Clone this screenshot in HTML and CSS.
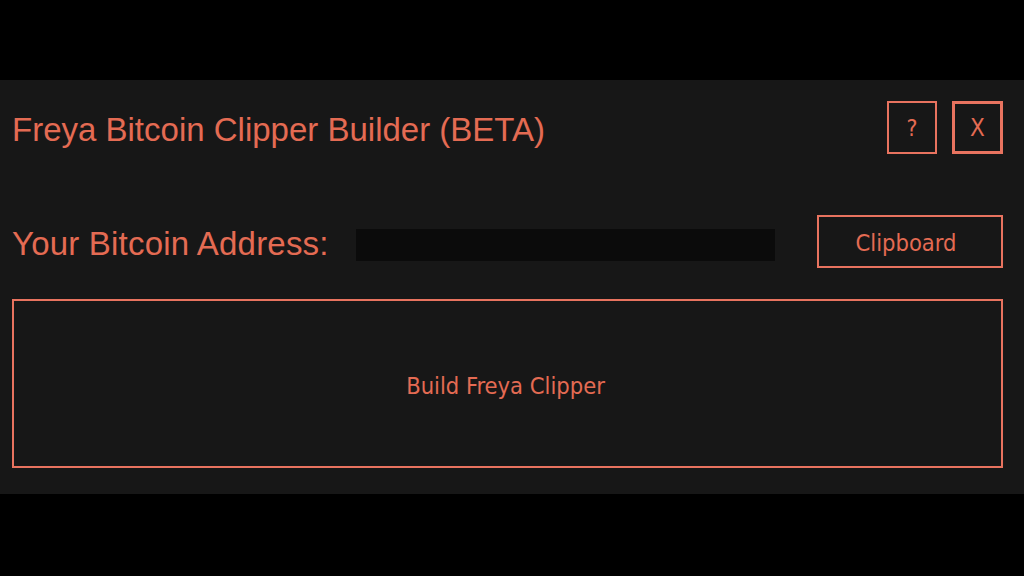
FILE: index.html
```html
<!DOCTYPE html>
<html>
<head>
<meta charset="utf-8">
<link rel="stylesheet" href="styles.css">
</head>
<body>
<div class="panel">
  <div class="title-row">
    <div class="title">Freya Bitcoin Clipper Builder (BETA)</div>
    <div class="win-buttons">
      <div class="win-btn help">?</div>
      <div class="win-btn close">X</div>
    </div>
  </div>
  <div class="address-row">
    <div class="label">Your Bitcoin Address:</div>
    <div class="address-input"></div>
    <div class="btn clipboard">Clipboard</div>
  </div>
  <div class="btn build">Build Freya Clipper</div>
</div>
</body>
</html>
```

FILE: styles.css
```css
html, body {
  margin: 0;
  padding: 0;
  background: #000;
  width: 1024px;
  height: 576px;
  overflow: hidden;
}

.panel {
  margin-top: 80px;
  height: 414px;
  box-sizing: border-box;
  background: #171717;
  padding: 21px 21px 26px 12px;
  display: flex;
  flex-direction: column;
  color: #e46b53;
}

.title-row {
  display: flex;
  align-items: center;
  justify-content: space-between;
  height: 53px;
}

.title, .label {
  font-family: "Liberation Sans", Arial, sans-serif;
  font-size: 33px;
  line-height: 38px;
  padding-top: 4px;
}

.label {
  letter-spacing: 0.2px;
}

.win-buttons {
  display: flex;
  gap: 15px;
}

.win-btn {
  box-sizing: border-box;
  width: 50px;
  height: 53px;
  display: flex;
  align-items: center;
  justify-content: center;
  font-family: "DejaVu Sans Condensed", "DejaVu Sans", sans-serif;
  font-size: 23px;
  border: 2px solid #e8735f;
}

.win-btn.close {
  width: 51px;
  border-width: 3px;
  font-size: 24px;
}

.address-row {
  display: flex;
  align-items: center;
  margin-top: 61px;
  height: 53px;
}

.address-input {
  width: 419px;
  height: 32px;
  background: #0b0b0b;
  margin-left: 27px;
  margin-top: 6px;
}

.btn {
  box-sizing: border-box;
  border: 2px solid #e8735f;
  display: flex;
  align-items: center;
  justify-content: center;
  font-family: "DejaVu Sans Condensed", "DejaVu Sans", sans-serif;
  font-size: 23.5px;
}

.clipboard {
  margin-left: auto;
  width: 186px;
  height: 53px;
  padding-top: 3px;
  padding-right: 8px;
}

.build {
  margin-top: 31px;
  flex: 1;
  padding-top: 4px;
  padding-right: 4px;
}
```
